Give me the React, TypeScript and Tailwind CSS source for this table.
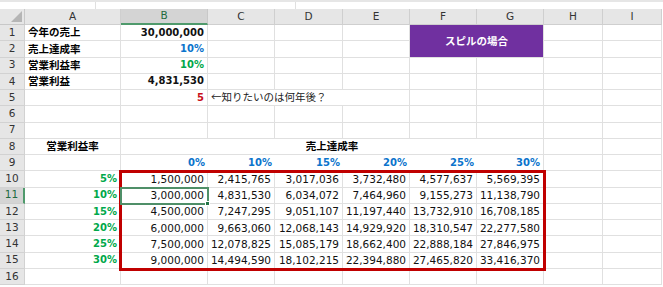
import React from 'react';

type Cell = {
  t?: string;
  cls?: string;
  span?: string;
  noR?: boolean;
  sel?: boolean;
  skip?: boolean;
};

const COLS = ['A', 'B', 'C', 'D', 'E', 'F', 'G', 'H', 'I'];

const JP = "font-['Noto_Sans_CJK_JP',sans-serif] text-[10.5px]";
const NUM = "font-['DejaVu_Sans',sans-serif] text-[10.5px]";
const BNUM = "font-['DejaVu_Sans',sans-serif] text-[10px] font-bold";

const label = (t: string): Cell => ({ t, cls: `${JP} font-bold justify-start` });
const num = (t: string): Cell => ({ t, cls: `${NUM} justify-end text-[#111]` });
const blue = (t: string, noR = false): Cell => ({ t, cls: `${BNUM} justify-end text-[#0a74cc]`, noR });
const green = (t: string): Cell => ({ t, cls: `${BNUM} justify-end text-[#00a84a]` });

const empty = (): Cell => ({});

const fill = (cells: Cell[]): Cell[] => {
  const out = [...cells];
  while (out.length < 9) out.push(empty());
  return out;
};

const TABLE = [
  ['1,500,000', '2,415,765', '3,017,036', '3,732,480', '4,577,637', '5,569,395'],
  ['3,000,000', '4,831,530', '6,034,072', '7,464,960', '9,155,273', '11,138,790'],
  ['4,500,000', '7,247,295', '9,051,107', '11,197,440', '13,732,910', '16,708,185'],
  ['6,000,000', '9,663,060', '12,068,143', '14,929,920', '18,310,547', '22,277,580'],
  ['7,500,000', '12,078,825', '15,085,179', '18,662,400', '22,888,184', '27,846,975'],
  ['9,000,000', '14,494,590', '18,102,215', '22,394,880', '27,465,820', '33,416,370'],
];
const RATES = ['5%', '10%', '15%', '20%', '25%', '30%'];

const ROWS: Cell[][] = [
  fill([
    label('今年の売上'),
    { t: '30,000,000', cls: `${BNUM} justify-end text-[#111]` },
    empty(),
    empty(),
    empty(),
    {
      t: 'スピルの場合',
      span: 'col-span-2 row-span-2',
      cls: `${JP} font-bold justify-center text-white bg-[#7030a0]`,
    },
    { skip: true },
  ]),
  fill([
    label('売上達成率'),
    blue('10%'),
    empty(),
    empty(),
    empty(),
    { skip: true },
    { skip: true },
  ]),
  fill([label('営業利益率'), green('10%')]),
  fill([label('営業利益'), { t: '4,831,530', cls: `${BNUM} justify-end text-[#111]` }]),
  fill([
    empty(),
    { t: '5', cls: `${BNUM} justify-end text-[#c8101a]` },
    { t: '←知りたいのは何年後？', cls: `${JP} justify-start text-[#222]`, noR: true },
    { noR: true },
  ]),
  fill([]),
  fill([]),
  fill([
    { t: '営業利益率', cls: `${JP} font-bold justify-center` },
    { t: '売上達成率', span: 'col-span-6', cls: `${JP} font-bold justify-center` },
    { skip: true },
    { skip: true },
    { skip: true },
    { skip: true },
    { skip: true },
  ]),
  fill([
    empty(),
    blue('0%', true),
    blue('10%', true),
    blue('15%', true),
    blue('20%', true),
    blue('25%', true),
    blue('30%'),
  ]),
  ...TABLE.map((vals, i) =>
    fill([green(RATES[i]), ...vals.map((v, j) => ({ ...num(v), sel: i === 1 && j === 0 }))])
  ),
  fill([]),
];

export default function App() {
  return (
    <div className="relative w-[663px] h-[287px] overflow-hidden bg-white text-black">
      {/* strip above the sheet */}
      <div className="h-[9px] border-t-2 border-[#e6e6e6] bg-white flex">
        <div className="w-[96px] border-r border-[#e0e0e0]" />
        <div className="w-[200px] border-r border-[#e0e0e0]" />
      </div>

      <div className="grid grid-cols-[25px_96px_87px_67px_68px_67px_67px_67px_59px_59px] grid-rows-[16px_repeat(16,16.27px)]">
        {/* column header */}
        <div className="relative bg-[#e6e6e6] border-r border-b border-[#c8c8c8]">
          <svg className="absolute right-[2px] bottom-[2px]" width="11" height="11" viewBox="0 0 11 11">
            <polygon points="11,0 11,11 0,11" fill="#b5b5b5" />
          </svg>
        </div>
        {COLS.map((c) => (
          <div
            key={c}
            className={
              c === 'B'
                ? "flex items-center justify-center bg-[#d4d4d4] border-r border-[#c8c8c8] border-b-2 border-b-[#4f9a6c] text-[#1f6b41] font-['DejaVu_Sans',sans-serif] text-[10.5px]"
                : "flex items-center justify-center bg-[#e6e6e6] border-r border-b border-[#cfcfcf] text-[#333] font-['DejaVu_Sans',sans-serif] text-[10.5px]"
            }
          >
            {c}
          </div>
        ))}

        {ROWS.map((row, r) => (
          <React.Fragment key={r}>
            <div
              className={
                r === 10
                  ? "flex items-center justify-center bg-[#d4d4d4] border-b border-[#cfcfcf] border-r-2 border-r-[#4f9a6c] text-[#1f6b41] font-['DejaVu_Sans',sans-serif] text-[10.5px]"
                  : "flex items-center justify-center bg-[#e6e6e6] border-r border-b border-[#d2d2d2] text-[#333] font-['DejaVu_Sans',sans-serif] text-[10.5px]"
              }
            >
              {r + 1}
            </div>
            {row.map((cell, c) =>
              cell.skip ? null : (
                <div
                  key={c}
                  className={`relative flex items-center px-[3px] whitespace-nowrap leading-none border-b border-[#e0e0e0] ${
                    cell.noR ? '' : 'border-r'
                  } ${cell.span ?? ''} ${cell.cls ?? ''} ${
                    cell.sel ? 'outline-2 outline-[#4f8f68] -outline-offset-1 z-20' : ''
                  }`}
                >
                  {cell.t}
                  {cell.sel && (
                    <span className="absolute -right-[3px] -bottom-[3px] w-[5px] h-[5px] bg-[#217346] border border-white" />
                  )}
                </div>
              )
            )}
          </React.Fragment>
        ))}
      </div>

      {/* red frame around the spill range */}
      <div className="absolute left-[119px] top-[170px] w-[427px] h-[101px] border-[3px] border-[#c00000] pointer-events-none z-10" />
    </div>
  );
}
